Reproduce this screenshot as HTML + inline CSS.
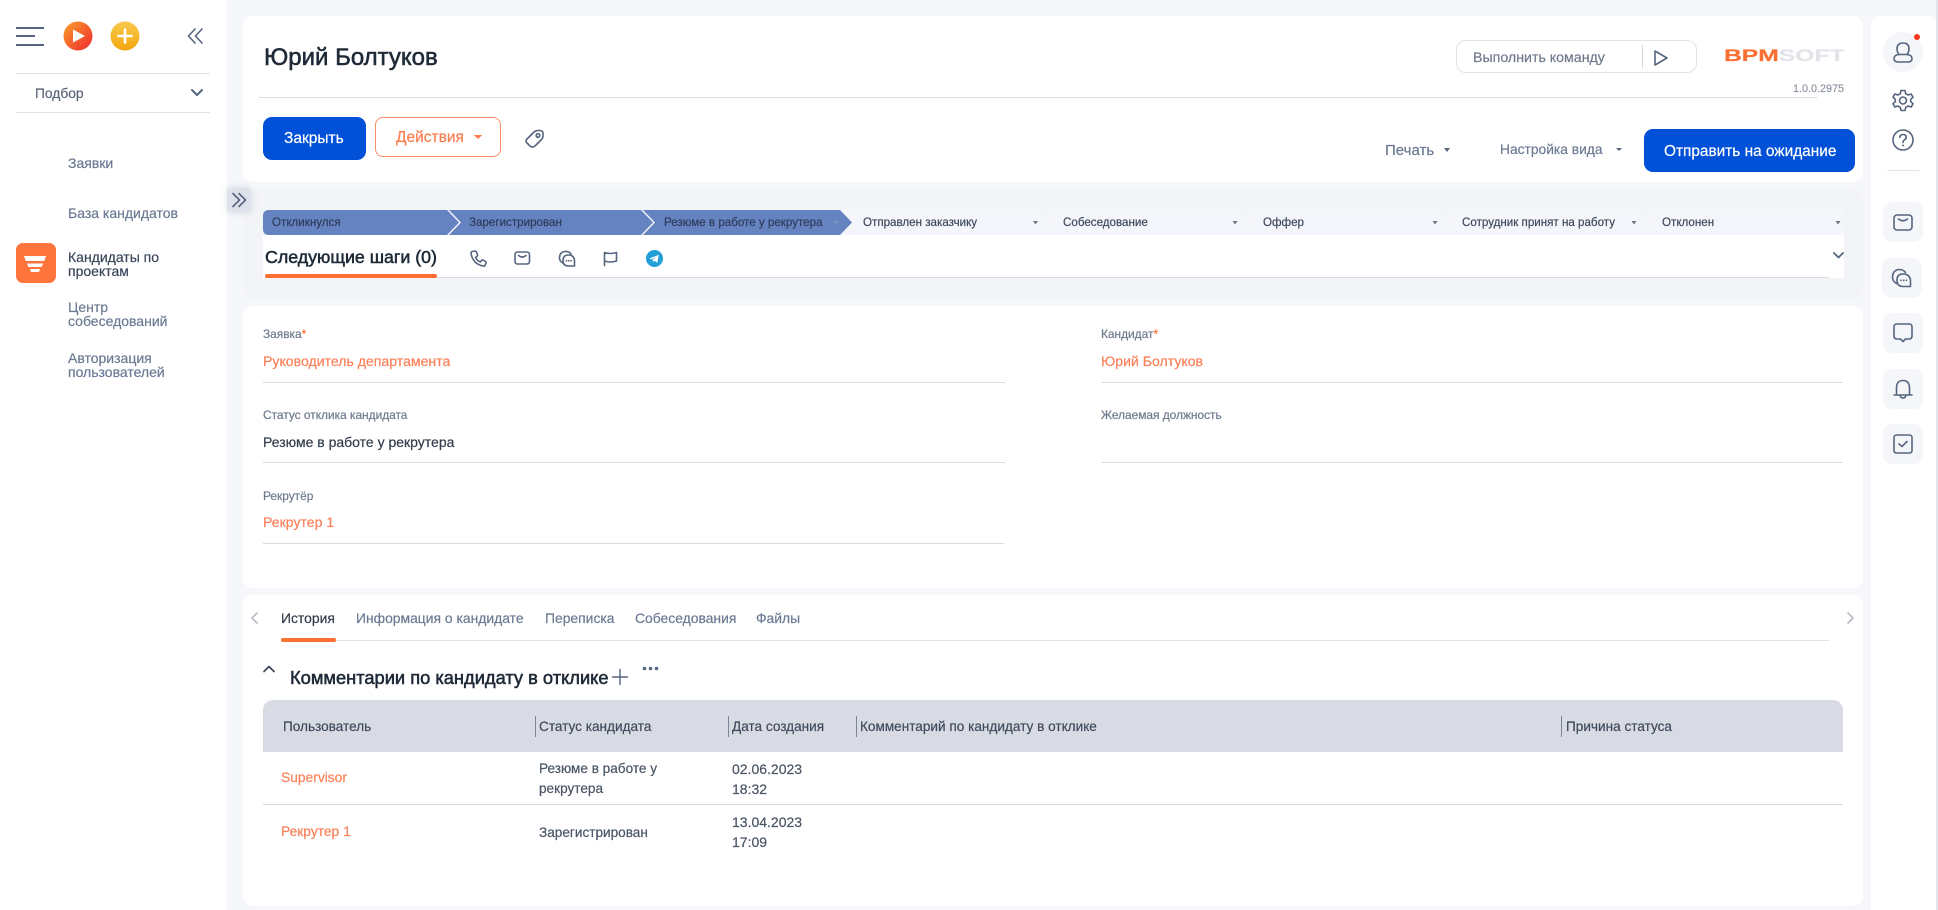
<!DOCTYPE html>
<html lang="ru"><head><meta charset="utf-8"><title>Юрий Болтуков</title>
<style>
html,body{margin:0;padding:0;width:1938px;height:910px;overflow:hidden;background:#f5f7fb}
body{position:relative;font-family:"Liberation Sans","Noto Sans CJK SC",sans-serif;color:#2b3442;filter:blur(.3px)}
.b{position:absolute;box-sizing:border-box}
.t{position:absolute;white-space:nowrap;line-height:20px;height:20px;font-size:13px;-webkit-text-stroke:.2px currentColor}
.nav{color:#6b7a93;font-size:14px}
.lb{color:#6f7a8c;font-size:11.900px}
.or{color:#fb8058;font-size:14.100px}
.dk{color:#323c4c;font-size:14px}
.st{font-size:11.600px;color:#3f4a5c}
.tab{font-size:13.900px;color:#6b7a93}
.th{font-size:13.600px;color:#3f4a5c}
.ln{position:absolute;height:1px;background:#d9dce3}
.dv{position:absolute;width:1px;height:21px;top:716px;background:#7c8594}
.tile{position:absolute;background:#f4f6fa;border-radius:9px;width:40px;height:40px}
svg.i{position:absolute;overflow:visible;fill:none;stroke:#56657f;stroke-width:1.600;stroke-linecap:round;stroke-linejoin:round}
.s{-webkit-text-stroke:.55px currentColor}
</style></head><body>

<!-- sidebar -->
<div class="b" style="left:0;top:0;width:227px;height:910px;background:#fff"></div>
<div class="b" style="left:16px;top:27px;width:28px;height:1.500px;background:#56657f"></div>
<div class="b" style="left:16px;top:35px;width:19px;height:1.500px;background:#56657f"></div>
<div class="b" style="left:16px;top:44px;width:28px;height:1.500px;background:#56657f"></div>
<svg class="i" style="left:0;top:0;stroke:none" width="227" height="60">
<defs><linearGradient id="g1" x1="0" y1="0" x2="1" y2="1"><stop offset="0" stop-color="#f9a02c"/><stop offset="1" stop-color="#f0272e"/></linearGradient>
<linearGradient id="g2" x1="0" y1="0" x2="0" y2="1"><stop offset="0" stop-color="#f9c94d"/><stop offset="1" stop-color="#f1a70e"/></linearGradient></defs>
<circle cx="78" cy="36" r="14.500" fill="url(#g1)"/><path d="M73 29.500 L85 36 L73 42.500Z" fill="#fff"/>
<circle cx="125" cy="36" r="14.500" fill="url(#g2)"/><path d="M125 29.500V42.500M118.500 36H131.500" stroke="#fff" stroke-width="2.600" fill="none"/>
</svg>
<svg class="i" style="left:187px;top:28px" width="16" height="16"><path d="M8 1 L1.500 8 L8 15M15 1 L8.500 8 L15 15"/></svg>
<div class="ln" style="left:16px;top:73px;width:194px;background:#dfe2e9"></div>
<div class="t" style="left:35px;top:84px;font-size:13.800px;color:#5a6679">Подбор</div>
<svg class="i" style="left:191px;top:89px;stroke-width:2" width="12" height="8"><path d="M1 1 L6 6 L11 1"/></svg>
<div class="ln" style="left:16px;top:112px;width:194px;background:#dfe2e9"></div>
<div class="t nav" style="left:68px;top:153px">Заявки</div>
<div class="t nav" style="left:68px;top:203px">База кандидатов</div>
<div class="b" style="left:16px;top:243px;width:40px;height:40px;background:#fd753b;border-radius:7px"></div>
<svg class="i" style="left:24px;top:255px;stroke:none" width="24" height="18"><path d="M0 1H22L20.300 6H1.700Z M3 8.500H19L17.700 12H4.300Z M6 14H16L15 17H7Z" fill="#fff"/></svg>
<div class="t nav" style="left:68px;top:247px;color:#39465a">Кандидаты по</div>
<div class="t nav" style="left:68px;top:261px;color:#39465a">проектам</div>
<div class="t nav" style="left:68px;top:297px">Центр</div>
<div class="t nav" style="left:68px;top:311px">собеседований</div>
<div class="t nav" style="left:68px;top:348px">Авторизация</div>
<div class="t nav" style="left:68px;top:362px">пользователей</div>
<div class="b" style="left:227px;top:188px;width:24px;height:24px;background:#dfe2ea;border-radius:4px;box-shadow:0 0 8px rgba(120,130,150,.25);z-index:3"></div>
<svg class="i" style="left:232px;top:193px;z-index:4" width="15" height="14"><path d="M1 0.500 L7.500 7 L1 13.500M7 0.500 L13.500 7 L7 13.500"/></svg>

<!-- header card -->
<div class="b" style="left:243px;top:16px;width:1620px;height:166px;background:#fff;border-radius:10px"></div>
<div class="t s" style="left:264px;top:48px;font-size:24px;color:#1f2a38">Юрий Болтуков</div>
<div class="ln" style="left:259px;top:97px;width:1558px"></div>
<div class="b" style="left:1456px;top:40px;width:241px;height:33px;border:1px solid #dfe2e9;border-radius:10px;background:#fff"></div>
<div class="t" style="left:1473px;top:48px;font-size:14.200px;color:#6f7a8c">Выполнить команду</div>
<div class="b" style="left:1642px;top:45px;width:1px;height:23px;background:#d5d9e0"></div>
<svg class="i" style="left:1654px;top:50px" width="14" height="16"><path d="M1 1 L13 8 L1 15Z"/></svg>
<div class="t" style="left:1724px;top:46px;font-size:17px;font-weight:bold;line-height:20px;transform:scaleX(1.450);transform-origin:left center;color:#fb6f33">BPM<span style="color:#e2e4ea">SOFT</span></div>
<div class="t" style="left:1793px;top:79px;font-size:10.800px;color:#8f97a3">1.0.0.2975</div>

<div class="b" style="left:263px;top:117px;width:103px;height:43px;background:#0050d8;border-radius:9px"></div>
<div class="t" style="left:284px;top:129px;color:#fff;font-size:15.500px">Закрыть</div>
<div class="b" style="left:375px;top:117px;width:126px;height:40px;background:#fff;border:1px solid #fb8c63;border-radius:8px"></div>
<div class="t" style="left:396px;top:128px;color:#fb7d50;font-size:15.500px">Действия</div>
<div class="b" style="left:474px;top:135px;border:4px solid transparent;border-top:4px solid #fb7d50;width:0;height:0;border-bottom:0;transform:scaleX(1.100)"></div>
<svg class="i" style="left:524px;top:129px" width="20" height="20"><path d="M3 10 L10 3 Q11.500 1.500 14 1.500 H16 Q19 1.500 19 4.500 V7 Q19 9 17.500 10.500 L11 17 Q8.500 19 6 17 L3 14 Q1 12 3 10Z"/><circle cx="14" cy="6.500" r="1.800"/></svg>

<div class="t" style="left:1385px;top:141px;font-size:15px;color:#6b7a93">Печать</div>
<div class="b" style="left:1444px;top:148px;border:3.500px solid transparent;border-top:4px solid #56657f;border-bottom:0;width:0;height:0"></div>
<div class="t" style="left:1500px;top:140px;font-size:13.800px;color:#6b7a93">Настройка вида</div>
<div class="b" style="left:1616px;top:148px;border:3px solid transparent;border-top:3px solid #56657f;border-bottom:0;width:0;height:0"></div>
<div class="b" style="left:1644px;top:129px;width:211px;height:43px;background:#0050d8;border-radius:9px"></div>
<div class="t" style="left:1664px;top:142px;color:#fff;font-size:15.400px">Отправить на ожидание</div>

<!-- stage panel -->
<div class="b" style="left:243px;top:190px;width:1620px;height:108px;background:#f3f4f7;border-radius:10px"></div>
<div class="b" style="left:263px;top:235px;width:1581px;height:43px;background:#fff"></div>
<svg class="i" style="left:0;top:0;stroke:none" width="1938" height="300">
<path d="M263 216 Q263 210 269 210 H447 L459 222.500 L447 235 H269 Q263 235 263 229Z" fill="#6583c1"/>
<path d="M449 210 H641 L653 222.500 L641 235 H449 L461 222.500Z" fill="#6583c1"/>
<path d="M643 210 H840 L852 222.500 L840 235 H643 L655 222.500Z" fill="#6583c1"/>
<path d="M842 210 H1040 L1052 222.500 L1040 235 H842 L854 222.500Z" fill="#f4f6fb"/>
<path d="M1042 210 H1240 L1252 222.500 L1240 235 H1042 L1054 222.500Z" fill="#f4f6fb"/>
<path d="M1242 210 H1440 L1452 222.500 L1440 235 H1242 L1254 222.500Z" fill="#f4f6fb"/>
<path d="M1442 210 H1639 L1651 222.500 L1639 235 H1442 L1454 222.500Z" fill="#f4f6fb"/>
<path d="M1641 210 H1844 V235 H1641 L1653 222.500Z" fill="#f4f6fb"/>
<path d="M1033 221h5l-2.500 3.500zM1232.500 221h5l-2.500 3.500zM1432.500 221h5l-2.500 3.500zM1631.500 221h5l-2.500 3.500zM1835.500 221h5l-2.500 3.500z" fill="#6b7482"/>
<path d="M833 221h5l-2.500 3.500z" fill="#7f93bd"/>
</svg>
<div class="t st" style="left:272px;top:213px;color:#2f3d5c">Откликнулся</div>
<div class="t st" style="left:469px;top:213px;color:#2f3d5c">Зарегистрирован</div>
<div class="t st" style="left:664px;top:213px;color:#2f3d5c">Резюме в работе у рекрутера</div>
<div class="t st" style="left:863px;top:213px">Отправлен заказчику</div>
<div class="t st" style="left:1063px;top:213px">Собеседование</div>
<div class="t st" style="left:1263px;top:213px">Оффер</div>
<div class="t st" style="left:1462px;top:213px">Сотрудник принят на работу</div>
<div class="t st" style="left:1662px;top:213px">Отклонен</div>

<div class="t s" style="left:265px;top:247px;font-size:17.800px;color:#1f2a38">Следующие шаги (0)</div>
<div class="ln" style="left:265px;top:277px;width:1564px;height:1px;background:#d9dce3"></div>
<div class="b" style="left:265px;top:274px;width:172px;height:3.500px;background:#fb6f33;border-radius:2px"></div>
<svg class="i" style="left:470px;top:250px" width="17" height="17"><path d="M2 1.500 L5 1 Q6 1 6.500 2 L7.500 5 Q7.800 6 7 6.500 L5.500 7.500 Q7.500 11 10.500 12 L11.500 10.500 Q12 9.700 13 10 L15.500 11.500 Q16.300 12 16 13 L15 15.500 Q14.500 16.500 13 16 Q3 14 1 3.500 Q1 2 2 1.500Z"/></svg>
<svg class="i" style="left:514px;top:251px" width="16" height="14"><rect x="1" y="1" width="14.500" height="12" rx="2.500"/><path d="M4.500 4.500 Q8.200 7.500 12 4.500"/></svg>
<svg class="i" style="left:558px;top:250px" width="18" height="17"><path d="M5 13 Q1 11 1.500 7 Q2 2 7 1.500 Q11 1.300 13 4"/><path d="M5 10.500 Q5 5 10.500 5 Q16 5 16.500 10.500 V16 H10.500 Q5 16 5 10.500Z"/><path d="M8.500 10.800h.01M10.800 10.800h.01M13 10.800h.01" stroke-width="1.800"/></svg>
<svg class="i" style="left:603px;top:251px" width="15" height="15"><path d="M1.500 14.500 V1.500 Q7 3.500 13.500 1.500 V10 Q7 12 1.500 10"/></svg>
<svg class="i" style="left:646px;top:250px;stroke:none" width="17" height="17"><circle cx="8.500" cy="8.500" r="8.500" fill="#229ed9"/><path d="M3.500 8.500 L12.800 4.700 L11.300 12.700 L8.500 10.700 L7 12 L6.800 9.800 L11 6.200 L5.800 9.500Z" fill="#fff"/></svg>
<svg class="i" style="left:1833px;top:252px;stroke-width:1.800" width="11" height="7"><path d="M1 1 L5.500 5.500 L10 1"/></svg>

<!-- form card -->
<div class="b" style="left:243px;top:306px;width:1620px;height:282px;background:#fff;border-radius:10px"></div>
<div class="t lb" style="left:263px;top:324px">Заявка<span style="color:#fb6f33">*</span></div>
<div class="t or" style="left:263px;top:351px">Руководитель департамента</div>
<div class="ln" style="left:263px;top:382px;width:742px"></div>
<div class="t lb" style="left:1101px;top:324px">Кандидат<span style="color:#fb6f33">*</span></div>
<div class="t or" style="left:1101px;top:351px">Юрий Болтуков</div>
<div class="ln" style="left:1101px;top:382px;width:742px"></div>
<div class="t lb" style="left:263px;top:405px">Статус отклика кандидата</div>
<div class="t dk" style="left:263px;top:432px">Резюме в работе у рекрутера</div>
<div class="ln" style="left:263px;top:462px;width:742px"></div>
<div class="t lb" style="left:1101px;top:405px">Желаемая должность</div>
<div class="ln" style="left:1101px;top:462px;width:742px"></div>
<div class="t lb" style="left:263px;top:486px">Рекрутёр</div>
<div class="t or" style="left:263px;top:512px">Рекрутер 1</div>
<div class="ln" style="left:263px;top:543px;width:741px"></div>

<!-- details card -->
<div class="b" style="left:243px;top:595px;width:1620px;height:311px;background:#fff;border-radius:10px"></div>
<svg class="i" style="left:251px;top:612px;stroke:#b9bec8;stroke-width:1.800" width="7" height="12"><path d="M6 1 L1 6 L6 11"/></svg>
<svg class="i" style="left:1847px;top:612px;stroke:#b9bec8;stroke-width:1.800" width="7" height="12"><path d="M1 1 L6 6 L1 11"/></svg>
<div class="t tab" style="left:281px;top:608px;color:#323c4c">История</div>
<div class="t tab" style="left:356px;top:608px">Информация о кандидате</div>
<div class="t tab" style="left:545px;top:608px">Переписка</div>
<div class="t tab" style="left:635px;top:608px">Собеседования</div>
<div class="t tab" style="left:756px;top:608px">Файлы</div>
<div class="ln" style="left:281px;top:640px;width:1548px;background:#dfe2e9"></div>
<div class="b" style="left:281px;top:638px;width:55px;height:3.500px;background:#fb6f33;border-radius:2px"></div>
<svg class="i" style="left:263px;top:665px;stroke:#3c4656;stroke-width:1.700" width="12" height="8"><path d="M1 6.500 L6 1.500 L11 6.500"/></svg>
<div class="t s" style="left:290px;top:668px;font-size:18.300px;color:#1f2a38">Комментарии по кандидату в отклике</div>
<svg class="i" style="left:612px;top:669px;stroke:#56657f;stroke-width:1.400" width="16" height="16"><path d="M8 0.500V15.500M0.500 8H15.500"/></svg>
<svg class="i" style="left:642px;top:666px;stroke:none" width="18" height="5"><circle cx="2.500" cy="2.500" r="1.800" fill="#56657f"/><circle cx="8.500" cy="2.500" r="1.800" fill="#56657f"/><circle cx="14.500" cy="2.500" r="1.800" fill="#56657f"/></svg>

<div class="b" style="left:263px;top:700px;width:1580px;height:52px;background:#d8dbe3;border-radius:10px 10px 0 0"></div>
<div class="t th" style="left:283px;top:717px">Пользователь</div>
<div class="dv" style="left:535px"></div><div class="t th" style="left:539px;top:717px">Статус кандидата</div>
<div class="dv" style="left:728px"></div><div class="t th" style="left:732px;top:717px">Дата создания</div>
<div class="dv" style="left:856px"></div><div class="t th" style="left:860px;top:717px">Комментарий по кандидату в отклике</div>
<div class="dv" style="left:1561px"></div><div class="t th" style="left:1566px;top:717px">Причина статуса</div>

<div class="t or" style="left:281px;top:768px;font-size:13.800px">Supervisor</div>
<div class="t dk" style="left:539px;top:759px;color:#4a5464;font-size:13.600px">Резюме в работе у</div>
<div class="t dk" style="left:539px;top:779px;color:#4a5464;font-size:13.600px">рекрутера</div>
<div class="t dk" style="left:732px;top:759px;color:#4a5464">02.06.2023</div>
<div class="t dk" style="left:732px;top:779px;color:#4a5464">18:32</div>
<div class="ln" style="left:263px;top:804px;width:1580px"></div>
<div class="t or" style="left:281px;top:822px;font-size:13.800px">Рекрутер 1</div>
<div class="t dk" style="left:539px;top:823px;color:#4a5464;font-size:13.600px">Зарегистрирован</div>
<div class="t dk" style="left:732px;top:812px;color:#4a5464">13.04.2023</div>
<div class="t dk" style="left:732px;top:832px;color:#4a5464">17:09</div>

<!-- right panel -->
<div class="b" style="left:1871px;top:16px;width:65px;height:894px;background:#fff;border-radius:8px 8px 0 0"></div>
<div class="b" style="left:1936px;top:0;width:2px;height:910px;background:#e4e6eb"></div>
<div class="b" style="left:1883px;top:32px;width:40px;height:40px;border-radius:50%;background:#f4f6fa"></div>
<div class="b" style="left:1914px;top:34px;width:6px;height:6px;border-radius:50%;background:#f5391c"></div>
<svg class="i" style="left:1893px;top:42px" width="20" height="21"><path d="M10 1 Q16 1 16 7 Q16 10 14 12.500 H6 Q4 10 4 7 Q4 1 10 1Z"/><path d="M6 12.500 Q1 13 1 16.500 Q1 20 5 20 H15 Q19 20 19 16.500 Q19 13 14 12.500"/></svg>
<svg class="i" style="left:1892px;top:89px" width="22" height="23"><path d="M9 1.500 H13 L13.700 4.700 L16.200 6 L19.200 5 L21 8.300 L18.700 10.300 V12.700 L21 14.700 L19.200 18 L16.200 17 L13.700 18.300 L13 21.500 H9 L8.300 18.300 L5.800 17 L2.800 18 L1 14.700 L3.300 12.700 V10.300 L1 8.300 L2.800 5 L5.800 6 L8.300 4.700Z"/><circle cx="11" cy="11.500" r="3.500"/></svg>
<svg class="i" style="left:1892px;top:129px" width="22" height="22"><circle cx="11" cy="11" r="10"/><path d="M7.800 8.500 Q8 5.500 11 5.500 Q14.200 5.500 14.200 8.300 Q14.200 10 12.300 11 Q11 11.800 11 13.500"/><path d="M11 16.500h.01" stroke-width="2"/></svg>
<div class="b" style="left:1887px;top:170px;width:32px;height:1px;background:#dfe2e9"></div>
<div class="tile" style="left:1883px;top:202px"></div>
<svg class="i" style="left:1893px;top:214px" width="20" height="17"><rect x="1" y="1" width="18" height="15" rx="3"/><path d="M5.500 5 Q10 8.500 14.500 5"/></svg>
<div class="tile" style="left:1882px;top:258px"></div>
<svg class="i" style="left:1891px;top:268px" width="21" height="20"><path d="M5.500 15.500 Q1 13 1.500 8 Q2.500 2 8 1.500 Q12.500 1.500 14.500 4.500"/><path d="M6 12 Q6 6 12 6 Q18.500 6 19.500 12 V18.500 H12 Q6 18.500 6 12Z"/><path d="M10 12.300h.01M12.700 12.300h.01M15.400 12.300h.01" stroke-width="1.800"/></svg>
<div class="tile" style="left:1883px;top:313px"></div>
<svg class="i" style="left:1893px;top:323px" width="20" height="21"><path d="M4 1 H16 Q19 1 19 4 V13 Q19 16 16 16 H12.500 L10 18.500 L7.500 16 H4 Q1 16 1 13 V4 Q1 1 4 1Z"/></svg>
<div class="tile" style="left:1883px;top:369px"></div>
<svg class="i" style="left:1893px;top:379px" width="20" height="21"><path d="M3.500 16 V9 Q3.500 1.500 10 1.500 Q16.500 1.500 16.500 9 V16"/><path d="M1 16 H19"/><path d="M7 16 Q7.500 19 10 19 Q12.500 19 13 16"/></svg>
<div class="tile" style="left:1883px;top:424px"></div>
<svg class="i" style="left:1893px;top:434px" width="20" height="20"><rect x="1" y="1" width="18" height="18" rx="2.500"/><path d="M6 10 L9 12.500 L14 7.500"/></svg>
</body></html>
